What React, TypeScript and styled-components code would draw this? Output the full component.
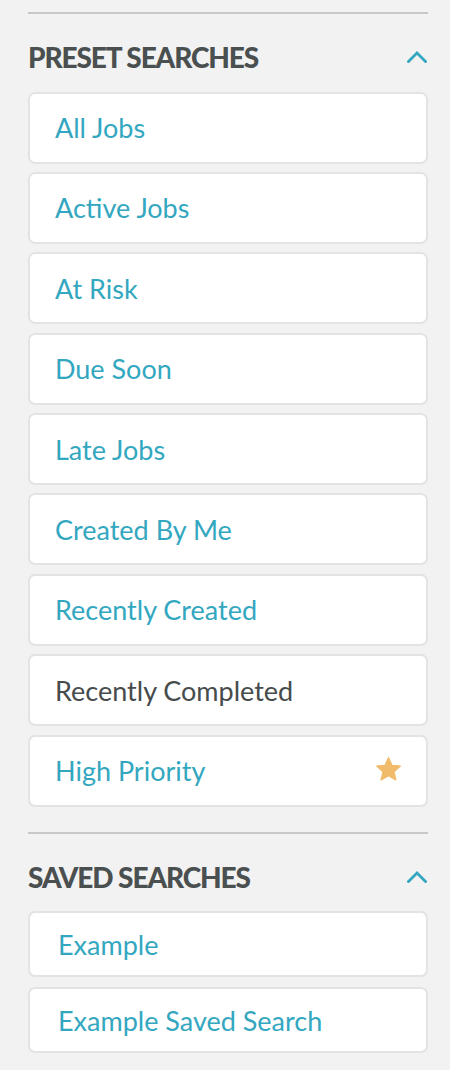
import React from "react";
import styled, { createGlobalStyle } from "styled-components";

const GlobalStyle = createGlobalStyle`
  html, body { margin: 0; padding: 0; background: #f2f2f2; }
  * { box-sizing: border-box; }
`;

const Sidebar = styled.div`
  width: 450px;
  padding: 12px 22px 0 28px;
  font-family: Lato, "Noto Sans", sans-serif;
`;

const Divider = styled.div`
  height: 2px;
  background: #c8c8c8;
`;

const Section = styled.section<{ $gapTop?: number }>`
  margin-top: ${(p) => p.$gapTop ?? 0}px;
`;

const Header = styled.div`
  display: flex;
  align-items: center;
  justify-content: space-between;
  height: 46px;
  margin: 20px 0 11.5px;
`;

const Title = styled.h2`
  margin: 0;
  font-size: 28px;
  font-weight: 900;
  letter-spacing: -1.1px;
  color: #4a4f50;
`;

const Chevron = styled.svg`
  width: 20px;
  height: 12px;
  margin-right: 1px;
`;

const List = styled.div<{ $gap: number }>`
  display: flex;
  flex-direction: column;
  gap: ${(p) => p.$gap}px;
`;

const Item = styled.div<{ $compact?: boolean; $active?: boolean }>`
  display: flex;
  align-items: center;
  justify-content: space-between;
  height: ${(p) => (p.$compact ? 66 : 72)}px;
  padding: 0 25px 0 ${(p) => (p.$compact ? 28 : 25)}px;
  background: #ffffff;
  border: 2px solid #e3e3e3;
  border-radius: 7px;
  font-size: 27px;
  font-weight: 400;
  color: ${(p) => (p.$active ? "#464b4c" : "#33a7c0")};
`;

const Star = styled.svg`
  width: 25px;
  height: 24px;
  margin-top: -3px;
`;

const presets = [
  "All Jobs",
  "Active Jobs",
  "At Risk",
  "Due Soon",
  "Late Jobs",
  "Created By Me",
  "Recently Created",
  "Recently Completed",
  "High Priority",
];

const saved = ["Example", "Example Saved Search"];

const ChevronUp = () => (
  <Chevron viewBox="0 0 20 12">
    <polyline
      points="1.5,10.5 10,2 18.5,10.5"
      fill="none"
      stroke="#33a7c0"
      strokeWidth="2.8"
      strokeLinecap="square"
    />
  </Chevron>
);

const StarIcon = () => (
  <Star viewBox="0.8 0.2 22.4 21.4">
    <polygon
      points="12,0.8 15.1,7.6 22.6,8.3 16.9,13.3 18.6,20.7 12,16.8 5.4,20.7 7.1,13.3 1.4,8.3 8.9,7.6"
      fill="#f0bb6a"
      stroke="#f0bb6a"
      strokeWidth="1.2"
      strokeLinejoin="round"
    />
  </Star>
);

export default function App() {
  return (
    <>
      <GlobalStyle />
      <Sidebar>
        <Divider />
        <Section>
          <Header>
            <Title>PRESET SEARCHES</Title>
            <ChevronUp />
          </Header>
          <List $gap={8.4}>
            {presets.map((p) => (
              <Item key={p} $active={p === "Recently Completed"}>
                <span>{p}</span>
                {p === "High Priority" && <StarIcon />}
              </Item>
            ))}
          </List>
        </Section>
        <Section $gapTop={25}>
          <Divider />
          <Header>
            <Title>SAVED SEARCHES</Title>
            <ChevronUp />
          </Header>
          <List $gap={10.3}>
            {saved.map((s) => (
              <Item key={s} $compact>
                <span>{s}</span>
              </Item>
            ))}
          </List>
        </Section>
      </Sidebar>
    </>
  );
}
